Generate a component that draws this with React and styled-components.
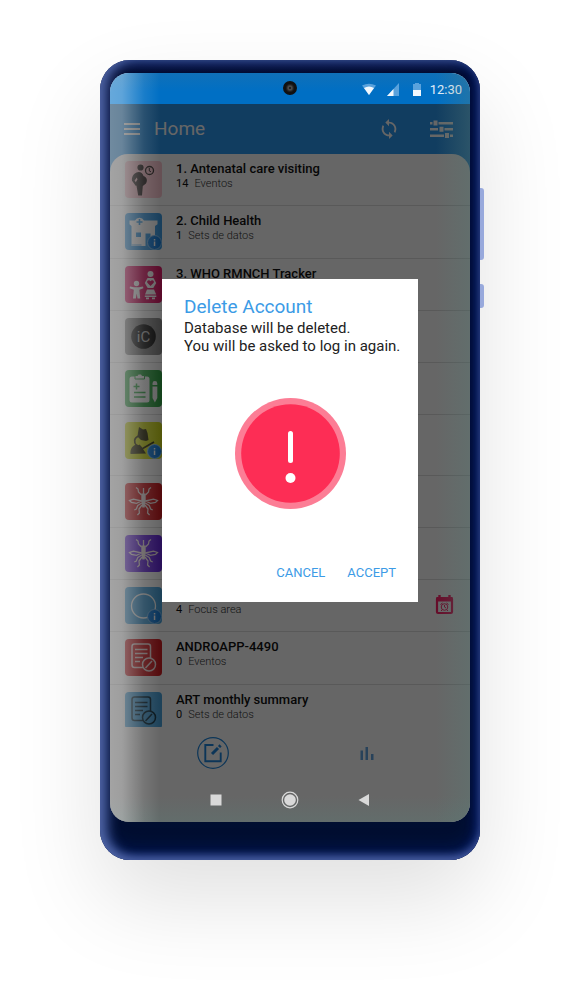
import React from "react";
import styled, { createGlobalStyle } from "styled-components";

const sans = `Roboto, "Liberation Sans", sans-serif`;

const GlobalStyle = createGlobalStyle`
  * { box-sizing: border-box; }
  body { margin: 0; background: #fff; font-family: ${sans}; }
  button { border: 0; padding: 0; background: none; font: inherit; color: inherit; display: flex; cursor: pointer; }
  svg { display: block; }
  ul { list-style: none; margin: 0; padding: 0; }
  h1, h2, h3, p { margin: 0; font-weight: 400; }
`;

const Page = styled.main`
  min-height: 100vh;
  display: flex;
  justify-content: center;
  align-items: flex-start;
  padding: 60px 20px 140px 16px;
`;

const Phone = styled.div`
  position: relative;
  width: 100%;
  max-width: 380px;
  padding: 13px 10px 38px;
  border-radius: 30px;
  background: linear-gradient(180deg, #0d1e52 0, #020b30 14px, #000e30 100%);
  box-shadow:
    inset 8px 0 12px rgba(84, 104, 168, 0.85),
    inset 0 -4px 8px rgba(84, 104, 176, 0.7),
    inset 0 -8px 20px #001a5c,
    inset -6px 0 8px #001450,
    0 40px 90px rgba(0, 0, 0, 0.12);
`;

const SideKey = styled.span`
  position: absolute;
  left: 100%;
  top: ${(p) => p.$top}px;
  width: 4px;
  height: ${(p) => p.$size}px;
  border-radius: 0 3px 3px 0;
  background: #98a9dc;
`;

const Screen = styled.div`
  position: relative;
  display: flex;
  flex-direction: column;
  overflow: hidden;
  border-radius: 19px;
  background: #fff;
`;

const StatusBar = styled.div`
  position: relative;
  display: flex;
  align-items: center;
  justify-content: flex-end;
  gap: 6px;
  height: 31px;
  padding: 2px 8px 0;
  background: linear-gradient(180deg, #1070b8, #006fc4 60%);
  color: #e4effa;
  font-size: 13px;
`;

const StatusIcons = styled.div`
  display: flex;
  gap: 10px;
`;

const Camera = styled.span`
  position: absolute;
  left: calc(50% - 7px);
  top: 8px;
  width: 14px;
  height: 14px;
  border-radius: 50%;
  border: 3px solid #111;
  background: radial-gradient(#222 20%, #555 30%, #222 60%);
`;

const AppBar = styled.header`
  display: flex;
  align-items: center;
  height: 50px;
  padding: 0 17px 0 14px;
  background: #2c98f0;
  color: #fff;
`;

const AppTitle = styled.h1`
  flex: 1;
  margin-left: 14px;
  font-size: 19px;
  line-height: 24px;
`;

const AppActions = styled.div`
  display: flex;
  align-items: center;
  gap: 30px;
`;

const ListClip = styled.div`
  height: 573px;
  overflow: hidden;
  background: #2c98f0;
`;

const ProgramList = styled.ul`
  display: flex;
  flex-direction: column;
  min-height: 583px;
  border-radius: 18px 18px 0 0;
  background: #fff;
`;

const ProgramRow = styled.li`
  display: flex;
  align-items: flex-start;
  flex: 1 0 ${(p) => (p.$tall ? 60 : 52)}px;
  padding: 7px 16px 0 15px;
  border-bottom: 1px solid #dedede;
`;

const Tile = styled.div`
  position: relative;
  flex: none;
  width: 37px;
  height: 37px;
  margin-right: 14px;
  border-radius: 4px;
  background: ${(p) => p.$color};
`;

const Badge = styled.span`
  position: absolute;
  right: 0;
  bottom: 0;
  width: 15px;
  height: 15px;
  border-radius: 50%;
  border: 1px solid #8cc4f2;
  background: #1b82e0;
`;

const RowText = styled.div`
  flex: 1;
`;

const RowTitle = styled.h2`
  font-size: 13px;
  line-height: 16px;
  font-weight: 500;
  color: #111;
`;

const RowMeta = styled.p`
  display: flex;
  gap: 6px;
  font-size: 11px;
  line-height: 13px;
  font-weight: 300;
  color: #333;
`;

const Count = styled.span`
  font-weight: 400;
  color: #111;
`;

const RowAction = styled.button`
  && { margin-top: 7px; }
`;

const TabBar = styled.nav`
  display: flex;
  align-items: center;
  justify-content: center;
  gap: 122px;
  height: 51px;
  color: #1f86dc;
`;

const Tab = styled.button`
  width: 32px;
  height: 32px;
`;

const SystemNav = styled.nav`
  position: relative;
  z-index: 2;
  display: flex;
  align-items: center;
  justify-content: center;
  gap: 56px;
  height: 44px;
  color: #d9d9d9;
`;

const Scrim = styled.div`
  position: absolute;
  inset: 31px 0 0;
  background: rgba(0, 0, 0, 0.6);
`;

const Glare = styled.div`
  position: absolute;
  inset: 0;
  pointer-events: none;
  background:
    linear-gradient(90deg, rgba(255, 255, 255, 0.4) 0, rgba(255, 255, 255, 0.37) 12px, rgba(255, 255, 255, 0.1) 34px, transparent 50px),
    linear-gradient(270deg, rgba(90, 125, 120, 0.35) 0, transparent 34px),
    linear-gradient(0deg, rgba(90, 125, 120, 0.3) 0, transparent 26px);
`;

const DialogLayer = styled.div`
  position: absolute;
  inset: 206px 52px auto;
  z-index: 3;
`;

const Dialog = styled.section`
  padding: 17px 22px 19px;
  background: #fff;
  color: #222;
`;

const DialogTitle = styled.h3`
  font-size: 19px;
  line-height: 22px;
  color: #3c9be6;
`;

const DialogText = styled.p`
  margin-top: 1px;
  font-size: 15px;
  line-height: 18px;
  white-space: nowrap;
`;

const Alert = styled.div`
  display: flex;
  justify-content: center;
  padding: 43px 0 54px;
`;

const DialogActions = styled.div`
  display: flex;
  justify-content: flex-end;
  gap: 22px;
  font-size: 13px;
  line-height: 20px;
  color: #3c9be6;
`;

const DialogButton = styled.button`
  white-space: nowrap;
`;

const Glyph = ({ children }) => (
  <svg width="37" height="37" viewBox="0 0 37 37" fill="none" aria-hidden="true">{children}</svg>
);

const Pregnant = () => (
  <Glyph>
    <g fill="#3d3432">
      <circle cx="15.5" cy="6.5" r="3.1" />
      <path d="M11.500 11.500c3-1.400 6 0 7 3.500 3.300 1.200 4.300 4.500 2.500 7.500l-3.200 2.600L17 34.500h-3.800l-1.500-8.500-.8-5 1.600-2.500-.7-2-2.200 3 2.800 4-1.500 1.500-3.900-5.200c-.4-3.300.9-6.700 4.500-8.300z" />
    </g>
    <circle cx="24.500" cy="9.500" r="4" stroke="#3d3432" strokeWidth="1.300" />
    <path d="M24.300 7v3l1.700.8" stroke="#3d3432" />
  </Glyph>
);

const Hospital = () => (
  <Glyph>
    <path d="M4.500 7.500H10a5 5 0 0 1 9 0h13.500v3.700L30 13v20H6.500V13l-2-1.800z" fill="#fff" />
    <path d="M20.500 20.500h5V33h-5zM11 19.500h5V24h-5z" fill="#3f9fe6" />
    <path d="M14.500 6v6M11.500 9h6" stroke="#3f9fe6" strokeWidth="1.600" />
    <path d="M6.500 32h10" stroke="#3f9fe6" strokeWidth=".8" />
  </Glyph>
);

const MotherChild = () => (
  <Glyph>
    <g fill="#fff">
      <circle cx="11.500" cy="17.500" r="2.700" />
      <path d="M5 20.500l4 .8h5l4-.8.400 1.700-4 1.500.8 8.800h-2.700l-.8-5-.8 5H8l.8-8.800-4.200-1.500z" />
      <circle cx="25.500" cy="8" r="3" />
      <path d="M22.500 12h6l2.700 5-2.900 5h-5.600l-2.900-5z" />
      <path d="M22 23.500h7l2.200 5H20zM19.800 29.500h11.500V31H19.800zM21 31.500h3v1.800h-3zM27 31.500h3v1.800h-3z" />
    </g>
    <path d="M25.500 20l-3.200-3.200c-1-2 1.800-3.500 3.200-1.500 1.400-2 4.200-.5 3.200 1.500z" fill="#e0206c" />
  </Glyph>
);

const InfoCircle = () => (
  <Glyph>
    <circle cx="18.500" cy="18.500" r="12.300" fill="#262626" />
    <text x="18.500" y="24" textAnchor="middle" fontSize="15" fontFamily={sans} fill="#c4c4c4">iC</text>
  </Glyph>
);

const Clipboard = () => (
  <Glyph>
    <rect x="4.500" y="6.500" width="20" height="26" rx="2.500" fill="#f4f4f4" />
    <path d="M10 9V5.500h2.500L13 4h3.500l.5 1.500h2.500V9z" fill="#f4f4f4" stroke="#35a84a" />
    <path d="M11.500 13.500v6M8.500 16.500h6M9 22.500h11.500M9 27h11.500" stroke="#35a84a" strokeWidth="1.500" />
    <path d="M27.500 13.500a2.400 2.400 0 0 1 4.800 0v1.500h-4.800zM27.500 16.500h4.800V28l-2.400 4.500-2.400-4.500z" fill="#f4f4f4" />
  </Glyph>
);

const Seedling = () => (
  <Glyph>
    <path d="M14 5l4 2.500 3-.5 1.500 4 1 7-2.500 1-5-1-3.500-3.500.5-4zM5.500 32c-.5-5 2-9 6.500-9.500l4 1.500 5 7.500z" fill="#35330f" />
    <path d="M13.500 14c-4.500 2-5 6-2 9.500M15 28l14-8M14 23l3 5" stroke="#35330f" strokeWidth="1.700" />
  </Glyph>
);

const Mosquito = () => (
  <Glyph>
    <path d="M16.300 10.500h4.400v7l-1 7h-2.400l-1-7z" fill="#f2e6e6" />
    <g stroke="#f2e6e6" strokeWidth="1.300">
      <path d="M18.500 5v6M16.500 12l-3-3-.5-3-2-1.500M20.500 12l3-3 .5-3 2-1.500" />
      <path d="M16.500 18l-8-1.800-4 1.300 2 2 5 .8zM20.500 18l8-1.800 4 1.300-2 2-5 .8z" />
      <path d="M16.800 20l-4 2.500-1.500 3.500-2 1M17 22l-3 4 .4 4-2 2M20.200 20l4 2.500 1.500 3.500 2 1M20 22l3 4-.4 4 2 2" />
    </g>
  </Glyph>
);

const Ring = () => (
  <Glyph>
    <circle cx="18.500" cy="19" r="12" stroke="#fff" strokeWidth="1.300" />
  </Glyph>
);

const Report = ({ color, back }) => (
  <Glyph>
    <g stroke={color} strokeWidth="1.500">
      <rect x="7" y="5" width="18.500" height="23.500" rx="2.500" />
      <path d="M10 10.500h12.500M10 14.500h12.500M10 18.500h8M10 22.500h5" />
      <circle cx="24" cy="25.500" r="6.500" fill={back} />
      <path d="M20.500 29l6.500-7" />
    </g>
  </Glyph>
);

const programs = [
  { color: "#ffc9d2", icon: <Pregnant />, title: "1. Antenatal care visiting", count: 14, unit: "Eventos" },
  { color: "#3f9fe6", icon: <Hospital />, title: "2. Child Health", count: 1, unit: "Sets de datos", badge: true },
  { color: "#e0206c", icon: <MotherChild />, title: "3. WHO RMNCH Tracker" },
  { color: "#8f8f8f", icon: <InfoCircle /> },
  { color: "#35a84a", icon: <Clipboard /> },
  { color: "#d3dc1e", icon: <Seedling />, badge: true, tall: true },
  { color: "#d32023", icon: <Mosquito /> },
  { color: "#6a2be0", icon: <Mosquito /> },
  { color: "#4ba6de", icon: <Ring />, title: "Malaria focus investigation", count: 4, unit: "Focus area", badge: true, due: true },
  { color: "#d32023", icon: <Report color="#f2dede" back="#d32023" />, title: "ANDROAPP-4490", count: 0, unit: "Eventos" },
  { color: "#4ba6de", icon: <Report color="#123244" back="#4ba6de" />, title: "ART monthly summary", count: 0, unit: "Sets de datos" },
];

const Program = ({ color, icon, title, count, unit, badge, tall, due }) => (
  <ProgramRow $tall={tall}>
    <Tile $color={color}>
      {icon}
      {badge && (
        <Badge>
          <svg width="13" height="13" viewBox="0 0 13 13" fill="#fff" aria-hidden="true">
            <path d="M5.800 3h1.500v1.500H5.800zM5.800 5.500h1.500V10H5.800z" />
          </svg>
        </Badge>
      )}
    </Tile>
    <RowText>
      {title && <RowTitle>{title}</RowTitle>}
      {unit && <RowMeta><Count>{count}</Count>{unit}</RowMeta>}
    </RowText>
    {due && (
      <RowAction aria-label="Schedule">
        <svg width="19" height="21" viewBox="0 0 19 21" fill="none">
          <path d="M4.500 1v4M14.500 1v4" stroke="#ff2068" strokeWidth="2.400" />
          <rect x="2" y="4" width="15" height="15" rx="1" stroke="#ff2068" strokeWidth="2.200" />
          <path d="M1.500 3h16v4.500h-16z" fill="#ff2068" />
          <circle cx="9.500" cy="13" r="3.300" stroke="#ff2068" />
          <path d="M9.500 11v2l1.500 1M5.500 10.500l2-1.500M13.500 10.500l-2-1.500M7 16l-1 1M12 16l1 1" stroke="#ff2068" />
        </svg>
      </RowAction>
    )}
  </ProgramRow>
);

export default function App() {
  return (
    <Page>
      <GlobalStyle />
      <Phone>
        <SideKey $top={128} $size={72} />
        <SideKey $top={224} $size={24} />
        <Screen>
          <StatusBar>
            <Camera />
            <StatusIcons>
              <svg width="14" height="13" viewBox="0 0 14 13" aria-hidden="true">
                <path d="M0 2.500Q7-1 14 2.500L7 12z" fill="#5aa2dc" />
                <path d="M2 5Q7 2 12 5L7 12z" fill="#f2f8fd" />
              </svg>
              <svg width="14" height="13" viewBox="0 0 14 13" aria-hidden="true">
                <path d="M13 0v13H1z" fill="#5aa2dc" />
                <path d="M7.500 6v7H1z" fill="#f2f8fd" />
              </svg>
              <svg width="14" height="13" viewBox="0 0 14 13" aria-hidden="true">
                <path d="M5 0h4v1h2v12H3V1h2z" fill="#5aa2dc" />
                <path d="M3 7h8v6H3z" fill="#f2f8fd" />
              </svg>
            </StatusIcons>
            <span>12:30</span>
          </StatusBar>
          <AppBar>
            <button aria-label="Menu">
              <svg width="16" height="12" viewBox="0 0 16 12" fill="#fff"><path d="M0 0h16v2H0zM0 5h16v2H0zM0 10h16v2H0z" /></svg>
            </button>
            <AppTitle>Home</AppTitle>
            <AppActions>
              <button aria-label="Sync">
                <svg width="22" height="22" viewBox="0 0 24 24" fill="#fff">
                  <path d="M12 4V1L8 5l4 4V6c3.310 0 6 2.690 6 6 0 1.010-.25 1.970-.7 2.800l1.460 1.460C19.540 15.030 20 13.570 20 12c0-4.420-3.580-8-8-8zm0 14c-3.310 0-6-2.690-6-6 0-1.010.25-1.970.7-2.800L5.240 7.740C4.460 8.970 4 10.430 4 12c0 4.420 3.580 8 8 8v3l4-4-4-4v3z" />
                </svg>
              </button>
              <button aria-label="Filter">
                <svg width="23" height="18" viewBox="0 0 23 18" fill="#fff">
                  <path d="M0 2h2.500v2.500H0zM3.500.5h4v5h-4zM8.500 2H23v2.500H8.500zM0 8h8v2.500H0zM9.500 6.800h4v5h-4zM14.500 8H23v2.500h-8.500zM0 14.500h14V17H0zM15 13h4v5h-4zM20 14.500h3V17h-3z" />
                </svg>
              </button>
            </AppActions>
          </AppBar>
          <ListClip>
            <ProgramList>
              {programs.map((p, i) => <Program key={i} {...p} />)}
            </ProgramList>
          </ListClip>
          <TabBar>
            <Tab aria-label="Programs">
              <svg width="32" height="32" viewBox="0 0 32 32" fill="none" stroke="currentColor">
                <circle cx="16" cy="16" r="15.300" strokeWidth="1.200" />
                <path d="M16.500 8H8.300v16.200h15.400V15.500" strokeWidth="1.900" />
                <path d="M15 17l6-6" strokeWidth="3" />
                <path d="M22 10l1.600-1.600" strokeWidth="3" />
              </svg>
            </Tab>
            <Tab aria-label="Charts">
              <svg width="32" height="32" viewBox="0 0 32 32" fill="#64a6e0">
                <path d="M9.500 13.500h2.500V23H9.500zM14.500 10H17v13h-2.500zM20 17h2.500v6H20z" />
              </svg>
            </Tab>
          </TabBar>
          <Scrim />
          <SystemNav>
            <button aria-label="Recents">
              <svg width="18" height="18" viewBox="0 0 18 18" fill="currentColor"><path d="M3.500 3.500h11v11h-11z" /></svg>
            </button>
            <button aria-label="Home screen">
              <svg width="18" height="18" viewBox="0 0 18 18" fill="currentColor">
                <circle cx="9" cy="9" r="7.800" fill="none" stroke="currentColor" strokeWidth="1.200" />
                <circle cx="9" cy="9" r="5.800" />
              </svg>
            </button>
            <button aria-label="Back">
              <svg width="18" height="18" viewBox="0 0 18 18" fill="currentColor"><path d="M14 3v12L3.500 9z" /></svg>
            </button>
          </SystemNav>
          <Glare />
          <DialogLayer>
            <Dialog role="dialog" aria-labelledby="dialog-title">
              <DialogTitle id="dialog-title">Delete Account</DialogTitle>
              <DialogText>Database will be deleted.<br />You will be asked to log in again.</DialogText>
              <Alert>
                <svg width="111" height="111" viewBox="0 0 111 111" aria-hidden="true">
                  <circle cx="55.500" cy="55.500" r="55.500" fill="#fc7d95" />
                  <circle cx="55.500" cy="55.500" r="49.300" fill="#fd2d55" />
                  <rect x="53" y="33" width="5" height="32" rx="2.500" fill="#fff" />
                  <circle cx="55.500" cy="80" r="5" fill="#fff" />
                </svg>
              </Alert>
              <DialogActions>
                <DialogButton>CANCEL</DialogButton>
                <DialogButton>ACCEPT</DialogButton>
              </DialogActions>
            </Dialog>
          </DialogLayer>
        </Screen>
      </Phone>
    </Page>
  );
}
